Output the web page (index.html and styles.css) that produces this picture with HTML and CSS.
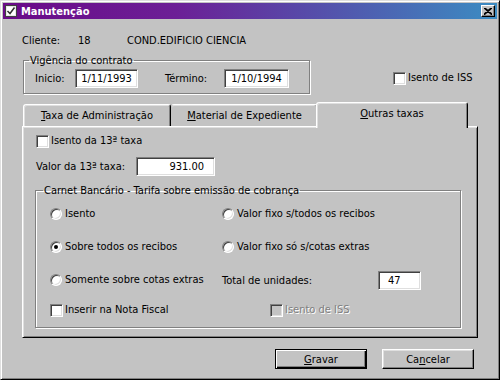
FILE: index.html
```html
<!DOCTYPE html>
<html lang="pt-br">
<head>
  <meta charset="UTF-8">
  <title>Manutenção</title>
  <link rel="stylesheet" href="styles.css">
</head>
<body>
  <div class="window">
    <div class="titlebar">
      <svg class="app-icon" width="12" height="12" viewBox="0 0 12 12">
        <rect x="0.5" y="0.5" width="11" height="11" fill="#e8e8e8" stroke="#404040"/>
        <rect x="2" y="2" width="8" height="8" fill="#fff"/>
        <path d="M2.5 6 L5 8.5 L9.5 2.5" fill="none" stroke="#303030" stroke-width="1.5"/>
      </svg>
      <span class="title">Manutenção</span>
      <span class="close">
        <svg width="8" height="7" viewBox="0 0 8 7">
          <path d="M0 0 L8 7 M8 0 L0 7 M1 0 L8 6 M7 0 L0 6" stroke="#000" stroke-width="1.2"/>
        </svg>
      </span>
    </div>

    <div class="client">
      <span class="client-label">Cliente:</span>
      <span class="client-code">18</span>
      <span>COND.EDIFICIO CIENCIA</span>
    </div>

    <div class="top-row">
      <fieldset class="vigencia">
        <legend>Vigência do contrato</legend>
        <div class="dates">
          <span class="lbl-inicio">Inicio:</span>
          <span class="field date">1/11/1993</span>
          <span class="lbl-termino">Término:</span>
          <span class="field date wide">1/10/1994</span>
        </div>
      </fieldset>
      <label class="check iss"><span class="box"></span>Isento de ISS</label>
    </div>

    <div class="tabs">
      <div class="tab tab-adm"><span><u>T</u>axa de Administração</span></div>
      <div class="tab tab-mat"><span><u>M</u>aterial de Expediente</span></div>
      <div class="tab active"><span><u>O</u>utras taxas</span></div>
    </div>

    <div class="panel">
      <label class="check"><span class="box"></span>Isento da 13ª taxa</label>
      <div class="valor">
        <span class="lbl-valor">Valor da 13ª taxa:</span>
        <span class="field num">931.00</span>
      </div>

      <fieldset class="carnet">
        <legend>Carnet Bancário - Tarifa sobre emissão de cobrança</legend>
        <div class="options">
          <label class="radio"><span class="dot"></span>Isento</label>
          <label class="radio"><span class="dot"></span>Valor fixo s/todos os recibos</label>
          <label class="radio"><span class="dot on"></span>Sobre todos os recibos</label>
          <label class="radio"><span class="dot"></span>Valor fixo só s/cotas extras</label>
          <label class="radio"><span class="dot"></span>Somente sobre cotas extras</label>
          <div class="units">
            <span class="lbl-units">Total de unidades:</span>
            <span class="field num units-field">47</span>
          </div>
          <label class="check"><span class="box"></span>Inserir na Nota Fiscal</label>
          <label class="check disabled"><span class="box"></span>Isento de ISS</label>
        </div>
      </fieldset>
    </div>

    <div class="actions">
      <button class="btn default"><u>G</u>ravar</button>
      <button class="btn">Ca<u>n</u>celar</button>
    </div>
  </div>
</body>
</html>
```

FILE: styles.css
```css
* {
  box-sizing: border-box;
}
body {
  margin: 0;
  font-family: "DejaVu Sans Condensed", "Liberation Sans", sans-serif;
  font-size: 11px;
  color: #000;
  background: #c3c3c3;
}
u {
  text-decoration: underline;
  text-underline-offset: 1px;
}

/* janela */
.window {
  width: 500px;
  height: 380px;
  padding: 2px;
  background: #c3c3c3;
  border: 1px solid;
  border-color: #dfdfdf #000 #000 #dfdfdf;
  box-shadow: inset 1px 1px 0 #fff, inset -1px -1px 0 #808080;
  display: flex;
  flex-direction: column;
}
.titlebar {
  height: 16px;
  display: flex;
  align-items: center;
  padding: 0 2px;
  color: #fff;
  font-weight: bold;
  background: linear-gradient(to right, #6a0a88 0%, #6c1f96 35%, #5848a8 60%, #3b8cc2 100%);
}
.app-icon {
  margin-right: 4px;
}
.title {
  flex: 1;
}
.close {
  width: 14px;
  height: 12px;
  display: flex;
  align-items: center;
  justify-content: center;
  background: #c3c3c3;
  border: 1px solid;
  border-color: #fff #000 #000 #fff;
  box-shadow: inset -1px -1px 0 #808080;
}

/* cliente */
.client {
  margin: 15px 0 0 19px;
  line-height: 14px;
  display: flex;
}
.client-label {
  width: 56px;
}
.client-code {
  width: 49px;
}

/* vigencia */
.top-row {
  display: flex;
  align-items: flex-end;
  margin: 6px 0 0 20px;
}
fieldset {
  margin: 0;
  border: 1px solid #808080;
  box-shadow: inset 1px 1px 0 #fff, 1px 1px 0 #fff;
}
legend {
  padding: 0 1px;
  line-height: 13px;
}
.vigencia {
  width: 287px;
  padding: 2px 19px 5px 11px;
}
.vigencia legend {
  margin-left: -6px;
}
.dates {
  display: flex;
  align-items: center;
}
.lbl-inicio {
  width: 40px;
}
.lbl-termino {
  width: 59px;
  margin-left: 27px;
}
.field {
  height: 19px;
  display: flex;
  align-items: center;
  background: #fff;
  border: 1px solid;
  border-color: #808080 #fff #fff #808080;
  box-shadow: inset 1px 1px 0 #404040, inset -1px -1px 0 #dfdfdf;
}
.date {
  width: 63px;
  justify-content: center;
}
.date.wide {
  width: 65px;
}

/* checkbox e radio */
.check,
.radio {
  display: flex;
  align-items: center;
  height: 14px;
  line-height: 14px;
}
.box {
  width: 13px;
  height: 13px;
  margin-right: 2px;
  background: #fff;
  border: 1px solid;
  border-color: #808080 #fff #fff #808080;
  box-shadow: inset 1px 1px 0 #404040, inset -1px -1px 0 #dfdfdf;
}
.iss {
  margin: 0 0 9px 83px;
}
.dot {
  width: 12px;
  height: 12px;
  margin-right: 3px;
  border-radius: 50%;
  background: #fff;
  border: 1px solid;
  border-color: #808080 #fff #fff #808080;
  box-shadow: inset 1px 1px 0 #404040, inset -1px -1px 0 #dfdfdf;
  display: flex;
  align-items: center;
  justify-content: center;
}
.dot.on::after {
  content: "";
  width: 4px;
  height: 4px;
  border-radius: 50%;
  background: #000;
}
.disabled {
  color: #808080;
  text-shadow: 1px 1px 0 #fff;
  margin-left: 48px;
}
.disabled .box {
  background: #c3c3c3;
}

/* abas */
.tabs {
  display: flex;
  align-items: flex-end;
  height: 24px;
  margin: 8px 0 0 20px;
}
.tab {
  position: relative;
  height: 22px;
  display: flex;
  align-items: center;
  justify-content: center;
  padding-bottom: 1px;
  background: #c3c3c3;
  border: 1px solid;
  border-bottom: none;
  border-color: #fff #000 transparent #fff;
  border-radius: 3px 3px 0 0;
  box-shadow: inset 1px 1px 0 #dfdfdf, inset -1px 0 0 #808080;
}
.tab-adm {
  width: 148px;
}
.tab-mat {
  width: 147px;
  border-left-color: #c3c3c3;
  box-shadow: inset -1px 0 0 #808080, inset 0 1px 0 #dfdfdf;
}
.tab.active {
  z-index: 1;
  width: 152px;
  height: 26px;
  margin: 0 0 -2px -2px;
  padding-bottom: 4px;
}

/* painel */
.panel {
  width: 456px;
  height: 212px;
  margin-left: 19px;
  padding: 7px 0 0 13px;
  border: 1px solid;
  border-color: #fff #000 #000 #fff;
  box-shadow: inset 1px 1px 0 #dfdfdf, inset -1px -1px 0 #808080;
}
.valor {
  display: flex;
  align-items: center;
  margin-top: 9px;
}
.lbl-valor {
  width: 100px;
}
.num {
  width: 79px;
  justify-content: flex-end;
  padding-right: 10px;
}
.carnet {
  width: 426px;
  height: 144px;
  margin: 8px 0 0 -1px;
  padding: 10px 0 0 14px;
}
.carnet legend {
  margin-left: -7px;
}
.options {
  display: grid;
  grid-template-columns: 172px 1fr;
  grid-template-rows: 33px 33px 30px 14px;
  align-items: start;
}
.units {
  display: flex;
  align-items: center;
  margin-top: -2px;
}
.lbl-units {
  width: 156px;
}
.units-field {
  width: 43px;
  justify-content: flex-start;
  padding-left: 9px;
}

/* botoes */
.actions {
  display: flex;
  justify-content: flex-end;
  gap: 15px;
  margin-top: 11px;
  padding-right: 23px;
}
.btn {
  width: 92px;
  height: 20px;
  padding: 0;
  font: inherit;
  color: #000;
  background: #c3c3c3;
  border: 1px solid;
  border-color: #fff #000 #000 #fff;
  box-shadow: inset -1px -1px 0 #808080, inset 1px 1px 0 #dfdfdf;
}
.btn.default {
  border: 1px solid #000;
  box-shadow: inset 1px 1px 0 #fff, inset -1px -1px 0 #000, inset -2px -2px 0 #808080;
}
```
